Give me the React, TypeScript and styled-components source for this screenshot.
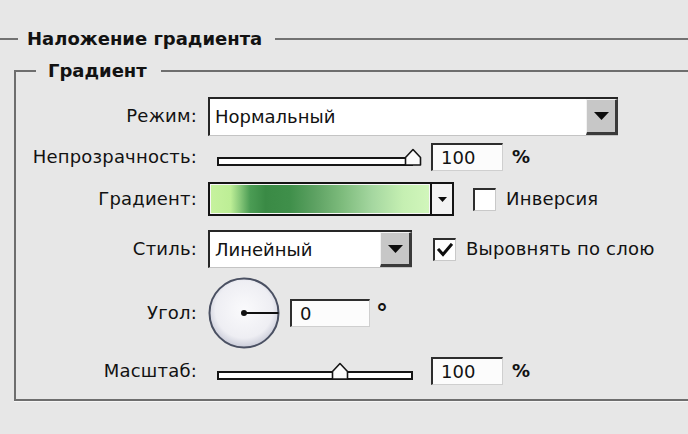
import React from "react";
import styled, { createGlobalStyle } from "styled-components";

const GlobalStyle = createGlobalStyle`
  html, body { margin: 0; padding: 0; background: #e7e7e7; }
  body { font-family: "DejaVu Sans", Verdana, sans-serif; color: #141414; }
  *, *::before, *::after { box-sizing: border-box; }
`;

const Page = styled.div`
  width: 688px;
  height: 434px;
  overflow: hidden;
  padding-top: 28px;
  background: #e7e7e7;
`;

const OuterGroup = styled.fieldset`
  margin: 0;
  padding: 0;
  min-width: 0;
  border: none;
  border-top: 2px solid #727272;
`;

const Caption = styled.legend<{ $indent: number; $padL: number; $padR: number }>`
  margin-left: ${(p) => p.$indent}px;
  padding: 0 ${(p) => p.$padR}px 0 ${(p) => p.$padL}px;
  font-size: 18px;
  font-weight: bold;
  line-height: 22px;
  color: #121212;
  white-space: nowrap;
`;

const InnerGroup = styled.fieldset`
  margin: 10px 0 0 14px;
  padding: 14px 0 15px 0;
  min-width: 0;
  border: 2px solid #6e6e6e;
  border-right: none;
  box-shadow: 0 1px 0 #f6f6f6;
`;

const Form = styled.div`
  display: flex;
  flex-direction: column;
  gap: 10px;
`;

const Row = styled.div<{ $h: number }>`
  display: flex;
  align-items: center;
  height: ${(p) => p.$h}px;
`;

const Label = styled.span`
  width: 181px;
  margin-right: 11px;
  text-align: right;
  font-size: 18px;
  line-height: 22px;
  white-space: nowrap;
  color: #121212;
  letter-spacing: 0.2px;
`;

const Controls = styled.div<{ $gap: number }>`
  display: flex;
  align-items: center;
  gap: ${(p) => p.$gap}px;
`;

const SelectBox = styled.div<{ $w: number; $h: number }>`
  display: flex;
  width: ${(p) => p.$w}px;
  height: ${(p) => p.$h}px;
  background: #ffffff;
  border-top: 2px solid #262626;
  border-left: 2px solid #262626;
  border-bottom: 1px solid #c4c4c4;
`;

const SelectText = styled.span`
  flex: 1;
  display: flex;
  align-items: center;
  padding-left: 5px;
  font-size: 18px;
  color: #121212;
`;

const SelectButton = styled.span`
  width: 32px;
  display: flex;
  align-items: center;
  justify-content: center;
  background: #c7c7c7;
  border-top: 1px solid #f2f2f2;
  border-left: 1px solid #f2f2f2;
  border-right: 3px solid #3a3a3a;
  border-bottom: 3px solid #3a3a3a;
`;

const SliderWrap = styled.div`
  position: relative;
  width: 196px;
  height: 18px;
  margin: 0 9px;
  display: flex;
  align-items: flex-end;
`;

const Track = styled.div`
  width: 100%;
  height: 9px;
  border: 2px solid #161616;
  background: #ffffff;
`;

const Thumb = styled.svg`
  position: absolute;
  bottom: 0;
  width: 18px;
  height: 18px;
  margin-left: -9px;
`;

const NumberField = styled.input<{ $w: number }>`
  width: ${(p) => p.$w}px;
  height: 28px;
  padding: 0 0 0 8px;
  margin: 0;
  font-family: "DejaVu Sans", Verdana, sans-serif;
  font-size: 18px;
  color: #121212;
  background: #fcfcfc;
  border: none;
  border-top: 2px solid #2e2e2e;
  border-left: 2px solid #2e2e2e;
  border-bottom: 1px solid #cfcfcf;
  border-right: 1px solid #cfcfcf;
  outline: none;
`;

const Unit = styled.span`
  font-size: 18px;
  font-weight: bold;
  line-height: 22px;
  color: #121212;
`;

const Degree = styled.span`
  font-size: 24px;
  font-weight: bold;
  line-height: 24px;
  color: #121212;
  align-self: flex-start;
  margin-top: 25px;
  margin-left: -4px;
`;

const GradientPicker = styled.div`
  display: flex;
  width: 246px;
  height: 34px;
  border: 2px solid #141414;
  background: #f7f7f7;
`;

const GradientSwatch = styled.span`
  flex: 1;
  margin: 1px;
  background: linear-gradient(
    to right,
    #c6f29e 0%,
    #bdee96 9%,
    #8ccb7c 13%,
    #4b9c54 18%,
    #3a8a45 25%,
    #3f8f4a 36%,
    #5ea263 48%,
    #7dbb7c 60%,
    #a5d7a0 74%,
    #c5efb2 88%,
    #d1f6bb 100%
  );
`;

const GradientArrow = styled.span`
  width: 22px;
  display: flex;
  align-items: center;
  justify-content: center;
  border-left: 2px solid #141414;
  background: #f3f3f3;
`;

const CheckField = styled.label`
  display: flex;
  align-items: center;
  gap: 10px;
  font-size: 18px;
  line-height: 22px;
  color: #121212;
  white-space: nowrap;
  letter-spacing: 0.2px;
`;

const Box = styled.span`
  width: 23px;
  height: 23px;
  display: flex;
  align-items: center;
  justify-content: center;
  background: #ffffff;
  border-top: 2px solid #2e2e2e;
  border-left: 2px solid #2e2e2e;
  border-bottom: 1px solid #c9c9c9;
  border-right: 1px solid #c9c9c9;
`;

const Dial = styled.svg`
  width: 72px;
  height: 72px;
  display: block;
`;

const DownTriangle = ({ w, h }: { w: number; h: number }) => (
  <svg width={w} height={h} viewBox={`0 0 ${w} ${h}`}>
    <polygon points={`0,0 ${w},0 ${w / 2},${h}`} fill="#0c0c0c" />
  </svg>
);

const Select = ({ value, w, h }: { value: string; w: number; h: number }) => (
  <SelectBox $w={w} $h={h}>
    <SelectText>{value}</SelectText>
    <SelectButton>
      <DownTriangle w={15} h={8} />
    </SelectButton>
  </SelectBox>
);

const Slider = ({ pct }: { pct: number }) => (
  <SliderWrap>
    <Track />
    <Thumb viewBox="0 0 18 18" style={{ left: `${pct}%` }}>
      <path d="M1.5 17 V9.5 L9 1.5 L16.5 9.5 V17 Z" fill="#fbfbfb" stroke="#151515" strokeWidth="1.6" strokeLinejoin="round" />
    </Thumb>
  </SliderWrap>
);

const Check = ({ checked, children }: { checked?: boolean; children: React.ReactNode }) => (
  <CheckField>
    <Box>
      {checked && (
        <svg width="16" height="14" viewBox="0 0 16 14">
          <path d="M2 7 L6 11.5 L14 2" fill="none" stroke="#0e0e0e" strokeWidth="3" strokeLinecap="square" />
        </svg>
      )}
    </Box>
    {children}
  </CheckField>
);

const AngleDial = ({ deg }: { deg: number }) => {
  const r = 34.5;
  const a = (deg * Math.PI) / 180;
  const x2 = 36 + r * Math.cos(a);
  const y2 = 36 - r * Math.sin(a);
  return (
    <Dial viewBox="0 0 72 72">
      <defs>
        <radialGradient id="dialFill" cx="50%" cy="45%" r="55%">
          <stop offset="0%" stopColor="#fafafc" />
          <stop offset="75%" stopColor="#eeeef3" />
          <stop offset="100%" stopColor="#c9cbd8" />
        </radialGradient>
      </defs>
      <circle cx="36" cy="36" r="34.5" fill="url(#dialFill)" stroke="#4a5062" strokeWidth="2" />
      <line x1="36" y1="36" x2={x2} y2={y2} stroke="#101010" strokeWidth="2" />
      <circle cx="36" cy="36" r="3" fill="#101010" />
    </Dial>
  );
};

export default function App() {
  return (
    <>
      <GlobalStyle />
      <Page>
        <OuterGroup>
          <Caption $indent={18} $padL={9} $padR={13}>Наложение градиента</Caption>
          <InnerGroup>
            <Caption $indent={20} $padL={12} $padR={14}>Градиент</Caption>
            <Form>
              <Row $h={40}>
                <Label>Режим:</Label>
                <Controls $gap={0}>
                  <Select value="Нормальный" w={410} h={39} />
                </Controls>
              </Row>
              <Row $h={22}>
                <Label>Непрозрачность:</Label>
                <Controls $gap={9}>
                  <Slider pct={100} />
                  <NumberField $w={72} readOnly value="100" />
                  <Unit>%</Unit>
                </Controls>
              </Row>
              <Row $h={42}>
                <Label>Градиент:</Label>
                <Controls $gap={19}>
                  <GradientPicker>
                    <GradientSwatch />
                    <GradientArrow>
                      <DownTriangle w={9} h={5} />
                    </GradientArrow>
                  </GradientPicker>
                  <Check>Инверсия</Check>
                </Controls>
              </Row>
              <Row $h={38}>
                <Label>Стиль:</Label>
                <Controls $gap={21}>
                  <Select value="Линейный" w={204} h={38} />
                  <Check checked>Выровнять по слою</Check>
                </Controls>
              </Row>
              <Row $h={70}>
                <Label>Угол:</Label>
                <Controls $gap={10}>
                  <AngleDial deg={0} />
                  <NumberField $w={80} readOnly value="0" />
                  <Degree>°</Degree>
                </Controls>
              </Row>
              <Row $h={26}>
                <Label>Масштаб:</Label>
                <Controls $gap={9}>
                  <Slider pct={63} />
                  <NumberField $w={72} readOnly value="100" />
                  <Unit>%</Unit>
                </Controls>
              </Row>
            </Form>
          </InnerGroup>
        </OuterGroup>
      </Page>
    </>
  );
}
